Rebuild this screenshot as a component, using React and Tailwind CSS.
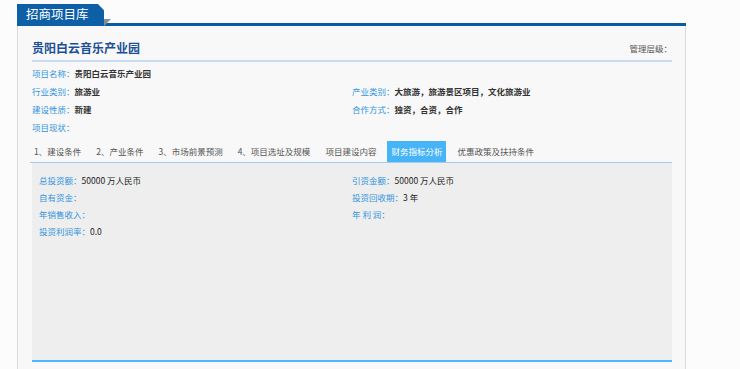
import React from 'react'

const font = { fontFamily: "'Noto Sans CJK SC', 'Noto Sans', sans-serif" }

const infoRows = [
  [{ k: '项目名称：', v: '贵阳白云音乐产业园' }, null],
  [{ k: '行业类别：', v: '旅游业' }, { k: '产业类别：', v: '大旅游，旅游景区项目，文化旅游业' }],
  [{ k: '建设性质：', v: '新建' }, { k: '合作方式：', v: '独资，合资，合作' }],
  [{ k: '项目现状：', v: '' }, null],
]

const tabs = ['1、建设条件', '2、产业条件', '3、市场前景预测', '4、项目选址及规模', '项目建设内容', '财务指标分析', '优惠政策及扶持条件']

const finance = [
  [{ k: '总投资额：', v: '50000 万人民币' }, { k: '引资金额：', v: '50000 万人民币' }],
  [{ k: '自有资金：', v: '' }, { k: '投资回收期：', v: '3 年' }],
  [{ k: '年销售收入：', v: '' }, { k: '年 利 润：', v: '' }],
  [{ k: '投资利润率：', v: '0.0' }, null],
]

function Field({ item, bold }) {
  if (!item) return <div />
  return (
    <div className="flex items-center text-[8.5px] leading-[10px] whitespace-nowrap">
      <span className="text-[#3395e0]">{item.k}</span>
      <span className={bold ? 'text-[#333] font-bold' : 'text-[#222]'}>{item.v}</span>
    </div>
  )
}

export default function App() {
  return (
    <div className="min-h-[369px] bg-[#fcfcfc]" style={font}>
      <div className="ml-[17px] w-[669px]">
        {/* header bar */}
        <div className="h-[26px] flex items-start border-b-[3px] border-[#0a5c9f] relative">
          <div className="mt-[4px] h-[22px] w-[87px] bg-[#0d5fa6] text-white text-[12.5px] leading-[19px] pl-[9px] [clip-path:polygon(0_0,93%_0,100%_28%,100%_100%,0_100%)]">
            招商项目库
          </div>
          <svg className="absolute left-[87px] top-[19px]" width="7" height="7" viewBox="0 0 7 7">
            <polygon points="0,0 7,0 0,7" fill="#8a8f96" />
          </svg>
        </div>

        {/* body */}
        <div className="border-x border-[#dadada] bg-[#f8f8f8] pl-[14px] pr-[13px] pb-[20px]">
          <div className="h-[36px] flex items-end justify-between pb-[4px] border-b-2 border-[#c8ddf1]">
            <span className="text-[12px] leading-[16px] font-bold text-[#1b4f95]">贵阳白云音乐产业园</span>
            <span className="text-[8.5px] leading-[16px] text-[#555]">管理层级：</span>
          </div>

          <div className="mt-[2px]">
            {infoRows.map((row, i) => (
              <div key={i} className="grid grid-cols-[320px_1fr] h-[18px] items-center">
                <Field item={row[0]} bold />
                <Field item={row[1]} bold />
              </div>
            ))}
          </div>

          {/* tabs */}
          <div className="mt-[5px] flex border-b border-[#a3cbec] -ml-[2px]">
            {tabs.map((t, i) => (
              <div
                key={t}
                className={
                  'h-[21px] px-[4px] flex items-center text-[8.5px] whitespace-nowrap ' +
                  (i === 5 ? 'bg-[#47b4f8] text-white ' : 'text-[#555] ') +
                  (i < tabs.length - 1 ? 'mr-[7px]' : '')
                }
              >
                {t}
              </div>
            ))}
          </div>

          <div className="h-[199px] bg-[#eeeeee] border-b-2 border-[#4ab7ff] pl-[7px] pt-[8px]">
            {finance.map((row, i) => (
              <div key={i} className="grid grid-cols-[313px_1fr] h-[17px] items-center">
                <Field item={row[0]} />
                <Field item={row[1]} />
              </div>
            ))}
          </div>
        </div>
      </div>
    </div>
  )
}
